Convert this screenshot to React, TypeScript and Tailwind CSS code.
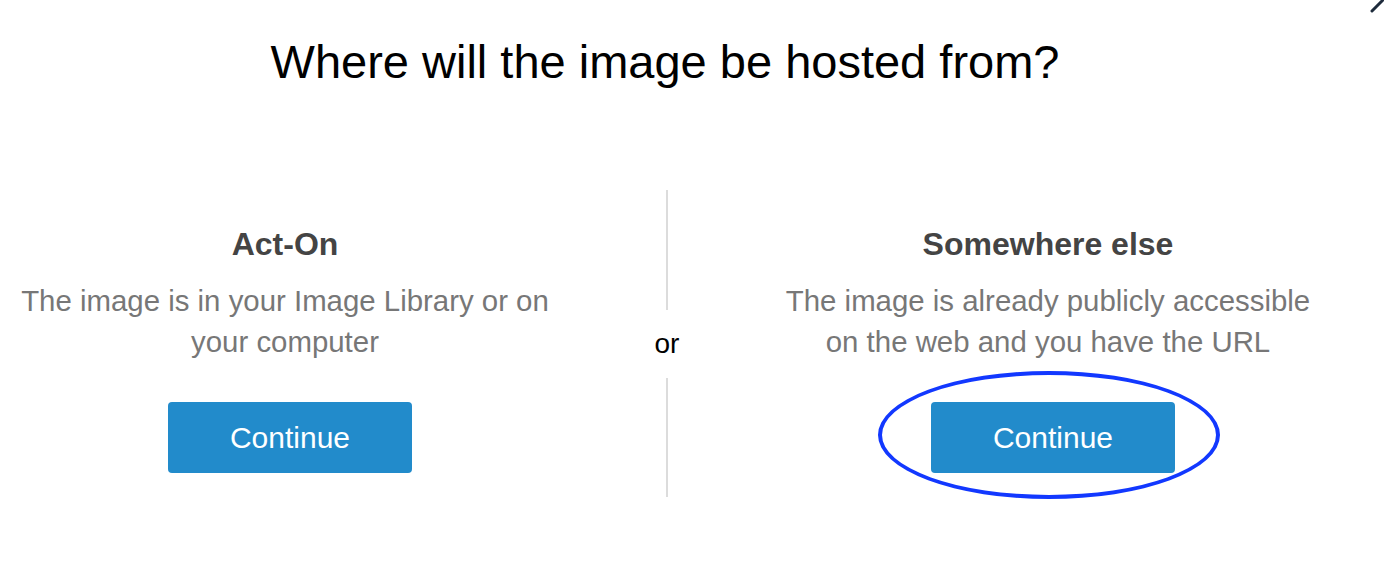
const font = { fontFamily: '"Liberation Sans", Arial, sans-serif' };

const Option = ({ title, lines, circled, width }: { title: string; lines: string[]; circled?: boolean; width: string }) => (
    <div className={`${width} flex flex-col items-center pt-[36px]`}>
        <h2 className="pr-[10px] text-[32px] leading-[37px] font-bold text-[#444444]">{title}</h2>
        <p className="mt-[17px] pr-[10px] text-[29.4px] leading-[41px] text-[#777777] text-center">
            {lines[0]}
            <br />
            {lines[1]}
        </p>
        <div className="relative mt-[40px]">
            <button className="w-[244px] h-[71px] rounded-[4px] bg-[#228bcb] text-white text-[30px]">
                Continue
            </button>
            {circled && (
                <div className="absolute left-[-53px] top-[-31px] w-[342px] h-[128px] rounded-[50%] border-[4px] border-[#1238ff] pointer-events-none" />
            )}
        </div>
    </div>
);

export default function App() {
    return (
        <div className="relative w-[1384px] h-[566px] bg-white overflow-hidden" style={font}>
            <svg className="absolute top-0 right-0" width="24" height="24" viewBox="0 0 24 24">
                <path d="M12 11 L26 -3" stroke="#1e2b3c" strokeWidth="3" strokeLinecap="round" />
            </svg>

            <h1 className="w-[1330px] pt-[34px] text-center text-[47px] leading-[55px] text-black">
                Where will the image be hosted from?
            </h1>

            <div className="flex mt-[101px]">
                <Option
                    width="w-[580px]"
                    title="Act-On"
                    lines={['The image is in your Image Library or on', 'your computer']}
                />
                <div className="w-[174px] flex flex-col items-center">
                    <div className="w-[2px] h-[120px] bg-[#dcdcdc]" />
                    <div className="h-[68px] flex items-center text-[28px] text-black">or</div>
                    <div className="w-[2px] h-[119px] bg-[#dcdcdc]" />
                </div>
                <Option
                    width="w-[598px]"
                    title="Somewhere else"
                    lines={['The image is already publicly accessible', 'on the web and you have the URL']}
                    circled
                />
            </div>
        </div>
    );
}
